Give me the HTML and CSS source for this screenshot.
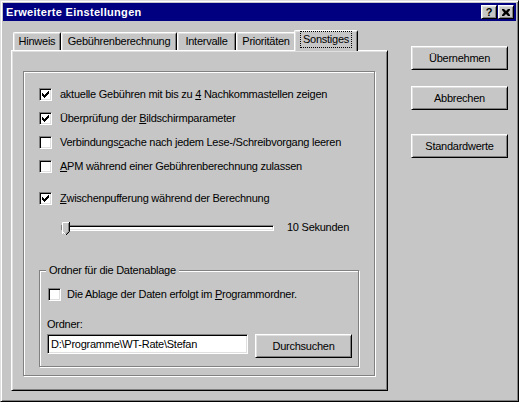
FILE: index.html
```html
<!DOCTYPE html>
<html lang="de">
<head>
  <meta charset="UTF-8">
  <title>Erweiterte Einstellungen</title>
  <link rel="stylesheet" href="styles.css">
</head>
<body>
  <div class="window">
    <div class="titlebar">
      <span class="title">Erweiterte Einstellungen</span>
      <div class="caption-buttons">
        <button class="cap-btn help">?</button>
        <button class="cap-btn close">
          <svg width="8" height="7" viewBox="0 0 8 7"><path d="M0 0h2l2 2 2-2h2v1l-2 2.5 2 2.5v1h-2l-2-2-2 2h-2v-1l2-2.5-2-2.5z" fill="#000"/></svg>
        </button>
      </div>
    </div>

    <div class="client">
      <div class="tabs">
        <div class="tab-strip">
          <div class="tab tab-hinweis">Hinweis</div>
          <div class="tab tab-gebuehren">Gebührenberechnung</div>
          <div class="tab tab-intervalle">Intervalle</div>
          <div class="tab tab-prio">Prioritäten</div>
          <div class="tab active"><span class="focus">Sonstiges</span></div>
        </div>

        <div class="panel">
          <div class="frame">
            <label class="check-row">
              <span class="check"><svg width="7" height="7" shape-rendering="crispEdges"><path d="M6 0h1v1h-1zM5 1h2v1h-2zM0 2h1v1h-1zM4 2h3v1h-3zM0 3h2v1h-2zM3 3h3v1h-3zM0 4h5v1h-5zM1 5h3v1h-3zM2 6h1v1h-1z"/></svg></span>
              <span>aktuelle Gebühren mit bis zu <u>4</u> Nachkommastellen zeigen</span>
            </label>
            <label class="check-row">
              <span class="check"><svg width="7" height="7" shape-rendering="crispEdges"><path d="M6 0h1v1h-1zM5 1h2v1h-2zM0 2h1v1h-1zM4 2h3v1h-3zM0 3h2v1h-2zM3 3h3v1h-3zM0 4h5v1h-5zM1 5h3v1h-3zM2 6h1v1h-1z"/></svg></span>
              <span>Überprüfung der <u>B</u>ildschirmparameter</span>
            </label>
            <label class="check-row">
              <span class="check"></span>
              <span>Verbindungs<u>c</u>ache nach jedem Lese-/Schreibvorgang leeren</span>
            </label>
            <label class="check-row">
              <span class="check"></span>
              <span><u>A</u>PM während einer Gebührenberechnung zulassen</span>
            </label>
            <label class="check-row spaced">
              <span class="check"><svg width="7" height="7" shape-rendering="crispEdges"><path d="M6 0h1v1h-1zM5 1h2v1h-2zM0 2h1v1h-1zM4 2h3v1h-3zM0 3h2v1h-2zM3 3h3v1h-3zM0 4h5v1h-5zM1 5h3v1h-3zM2 6h1v1h-1z"/></svg></span>
              <span><u>Z</u>wischenpufferung während der Berechnung</span>
            </label>

            <div class="slider-row">
              <div class="slider">
                <div class="channel"></div>
                <svg class="thumb" width="8" height="13" viewBox="0 0 8 13">
                  <path d="M0 0h8v10l-3.5 3h-1l-3.5-3z" fill="#c6c6c6"/>
                  <path d="M0.5 12V0.5H7" stroke="#fff" fill="none"/>
                  <path d="M0.5 9.5l3 3" stroke="#fff" fill="none"/>
                  <path d="M7.5 0v9.5l-3.5 3.5" stroke="#000" fill="none"/>
                  <path d="M6.5 1v8.2l-3 3" stroke="#808080" fill="none"/>
                </svg>
              </div>
              <span class="slider-value">10 Sekunden</span>
            </div>

            <fieldset class="group">
              <legend>Ordner für die Datenablage</legend>
              <div class="group-body">
                <label class="check-row small">
                  <span class="check"></span>
                  <span>Die Ablage der Daten erfolgt im <u>P</u>rogrammordner.</span>
                </label>
                <div class="field-label">Ordner:</div>
                <div class="field-row">
                  <div class="textbox">D:\Programme\WT-Rate\Stefan</div>
                  <button class="btn browse">Durchsuchen</button>
                </div>
              </div>
            </fieldset>
          </div>
        </div>
      </div>

      <div class="side-buttons">
        <button class="btn">Übernehmen</button>
        <button class="btn cancel">Abbrechen</button>
        <button class="btn defaults">Standardwerte</button>
      </div>
    </div>
  </div>
</body>
</html>
```

FILE: styles.css
```css
body {
  margin: 0;
  background: #c6c6c6;
  font-family: "Liberation Sans", Arial, sans-serif;
  font-size: 11px;
  letter-spacing: -0.25px;
  color: #000;
}
.window {
  box-sizing: border-box;
  width: 519px;
  height: 402px;
  padding: 2px;
  background: #c6c6c6;
  border: 1px solid;
  border-color: #dfdfdf #000 #000 #dfdfdf;
  box-shadow: inset 1px 1px #fff, inset -1px -1px #808080;
}
.titlebar {
  display: flex;
  align-items: center;
  justify-content: space-between;
  height: 18px;
  padding: 0 2px 0 3px;
  background: #000080;
}
.title {
  color: #fff;
  font-weight: bold;
  font-size: 11px;
  letter-spacing: 0.3px;
}
.caption-buttons {
  display: flex;
  gap: 1px;
}
.cap-btn {
  box-sizing: border-box;
  width: 16px;
  height: 14px;
  padding: 0;
  display: flex;
  align-items: center;
  justify-content: center;
  background: #c6c6c6;
  border: 1px solid;
  border-color: #fff #000 #000 #fff;
  box-shadow: inset 1px 1px #dfdfdf, inset -1px -1px #808080;
  font-family: "Liberation Sans", Arial, sans-serif;
  font-weight: bold;
  font-size: 11px;
  line-height: 1;
}
.cap-btn svg {
  display: block;
}

.client {
  display: flex;
  padding: 9px 0 0 8px;
}
.tabs {
  width: 377px;
}
.tab-strip {
  display: flex;
  align-items: flex-end;
  height: 20px;
  padding-left: 2px;
}
.tab {
  box-sizing: border-box;
  height: 18px;
  line-height: 16px;
  text-align: center;
  white-space: nowrap;
  border: 1px solid;
  border-bottom: none;
  border-color: #fff #000 #000 #fff;
  border-radius: 2px 2px 0 0;
  box-shadow: inset 1px 1px #dfdfdf, inset -1px 0 #808080;
}
.tab-hinweis { width: 48px; }
.tab-gebuehren { width: 116px; }
.tab-intervalle { width: 59px; }
.tab-prio { width: 60px; }
.tab.active {
  position: relative;
  z-index: 1;
  width: 64px;
  height: 21px;
  margin: 0 -2px -1px -2px;
  padding-top: 1px;
  line-height: 15px;
  background: #c6c6c6;
}
.focus {
  display: inline-block;
  padding: 0 2px;
  outline: 1px dotted #000;
  outline-offset: 0;
  line-height: 15px;
}

.panel {
  box-sizing: border-box;
  height: 341px;
  padding: 20px 11px 0 11px;
  border: 1px solid;
  border-color: #fff #000 #000 #fff;
  box-shadow: inset 1px 1px #dfdfdf, inset -1px -1px #808080;
}
.frame {
  box-sizing: border-box;
  width: 352px;
  height: 305px;
  padding: 10px 0 0 15px;
  border: 1px solid #808080;
  box-shadow: inset 1px 1px #fff, 1px 1px #fff;
}
.check-row {
  display: flex;
  align-items: center;
  gap: 8px;
  height: 24px;
}
.check-row.spaced {
  margin-top: 8px;
}
.check {
  box-sizing: border-box;
  flex: none;
  display: flex;
  align-items: center;
  justify-content: center;
  width: 13px;
  height: 13px;
  background: #fff;
  border: 1px solid;
  border-color: #808080 #fff #fff #808080;
  box-shadow: inset 1px 1px #000, inset -1px -1px #dfdfdf;
}
.check svg {
  display: block;
}

.slider-row {
  display: flex;
  align-items: center;
  height: 24px;
  margin-top: 5px;
  padding-left: 22px;
}
.slider {
  position: relative;
  width: 213px;
  height: 24px;
  display: flex;
  align-items: center;
}
.channel {
  box-sizing: border-box;
  width: 100%;
  height: 6px;
  margin-top: 1px;
  background: #fff;
  border: 1px solid;
  border-color: #808080 #fff #fff #808080;
  box-shadow: inset 1px 1px #000, inset -1px -1px #dfdfdf;
}
.thumb {
  position: absolute;
  left: 1px;
  top: 7px;
}
.slider-value {
  margin-left: 13px;
}

.group {
  box-sizing: border-box;
  width: 320px;
  margin: 25px 0 0 0;
  padding: 0;
  border: 1px solid #808080;
  box-shadow: inset 1px 1px #fff, 1px 1px #fff;
}
.group legend {
  margin-left: 6px;
  padding: 0 3px;
  line-height: 13px;
  background: #c6c6c6;
}
.group-body {
  padding: 7px 0 8px 7px;
}
.check-row.small {
  gap: 6px;
  height: 20px;
  padding-left: 1px;
}
.field-label {
  margin-top: 14px;
  line-height: 13px;
}
.field-row {
  display: flex;
  align-items: flex-start;
  margin-top: 3px;
}
.textbox {
  box-sizing: border-box;
  width: 201px;
  height: 20px;
  padding-left: 3px;
  line-height: 18px;
  background: #fff;
  border: 1px solid;
  border-color: #808080 #fff #fff #808080;
  box-shadow: inset 1px 1px #000, inset -1px -1px #dfdfdf;
}

.btn {
  box-sizing: border-box;
  width: 97px;
  height: 24px;
  padding: 0;
  background: #c6c6c6;
  border: 1px solid;
  border-color: #fff #000 #000 #fff;
  box-shadow: inset 1px 1px #dfdfdf, inset -1px -1px #808080;
  font-family: "Liberation Sans", Arial, sans-serif;
  font-size: 11px;
  letter-spacing: -0.25px;
  color: #000;
}
.btn.browse {
  margin-left: 7px;
}
.side-buttons {
  display: flex;
  flex-direction: column;
  margin-left: 23px;
  padding-top: 16px;
}
.btn.cancel {
  margin-top: 16px;
}
.btn.defaults {
  margin-top: 24px;
}
```
